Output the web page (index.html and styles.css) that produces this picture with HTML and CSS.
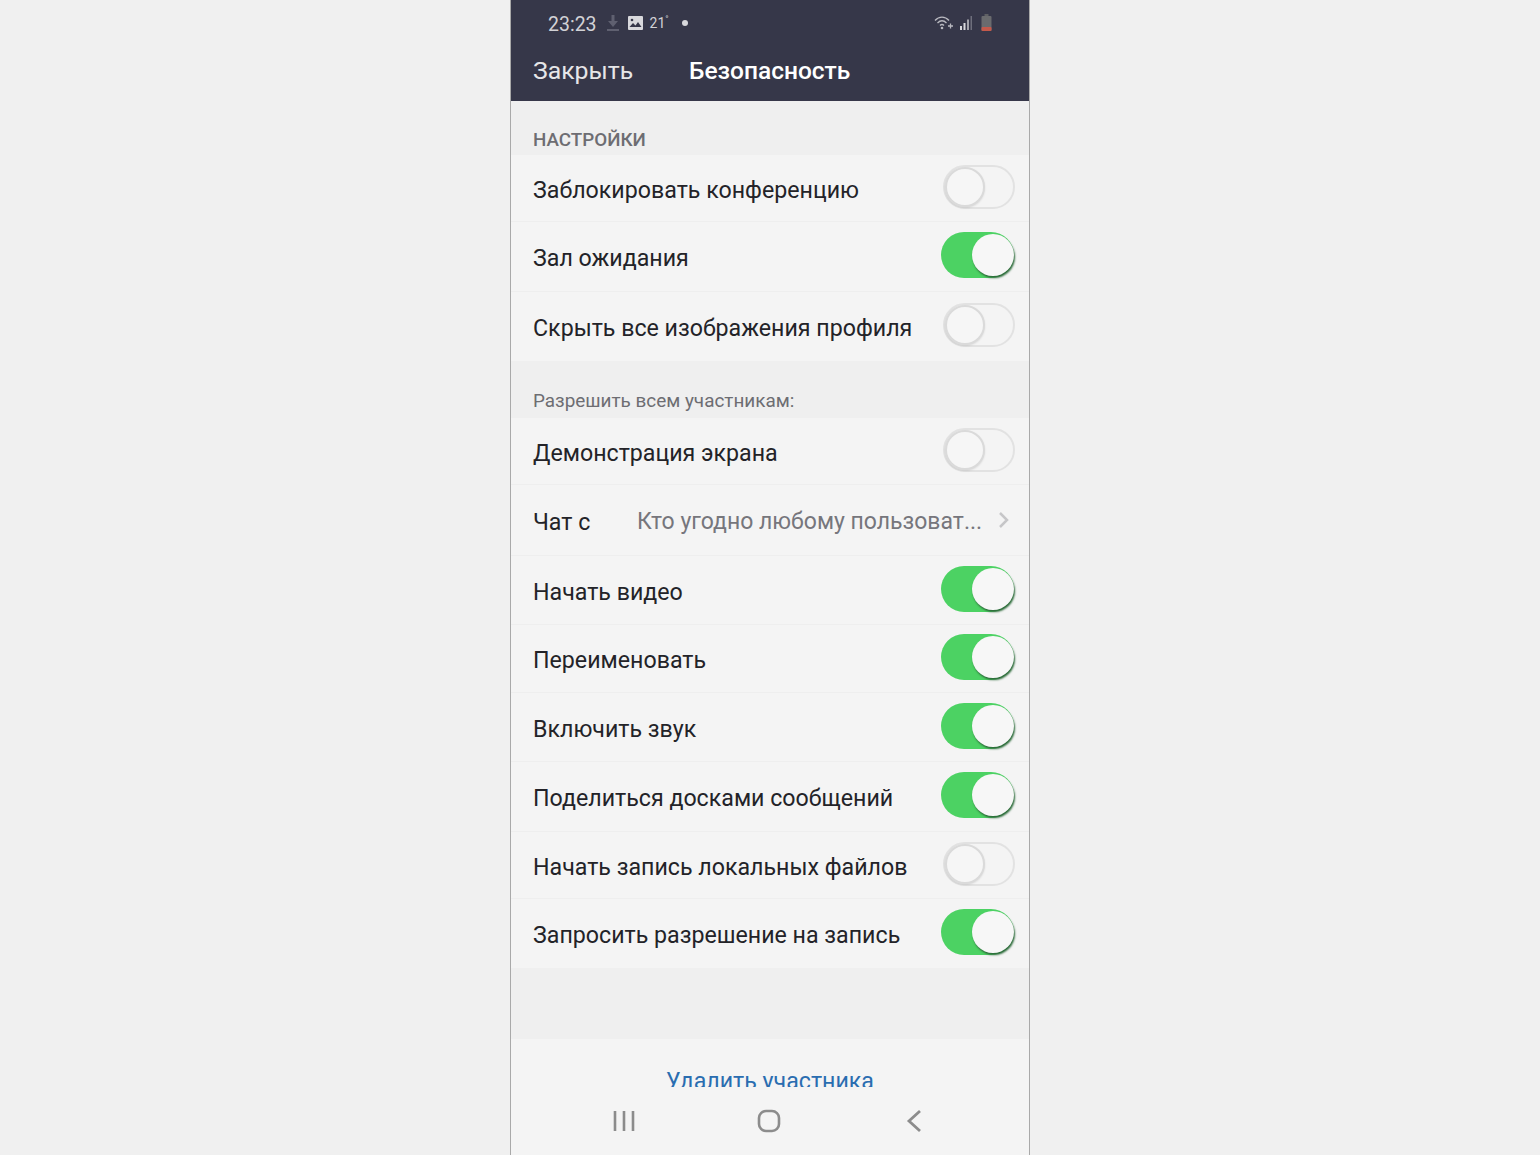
FILE: index.html
```html
<!DOCTYPE html>
<html lang="ru">
<head>
    <meta charset="UTF-8">
    <meta name="viewport" content="width=device-width, initial-scale=1.0">
    <title>Безопасность</title>
    <link rel="stylesheet" href="styles.css">
</head>
<body>
    <div class="phone">
        <div class="header">
            <div class="status-bar">
                <span class="clock">23:23</span>
                <svg class="icon-download" width="12" height="18" viewBox="0 0 12 18"><path d="M4.500 1h3v6H11l-5 6-5-6h3.500z" fill="#5f6070"/><rect x="0" y="15" width="12" height="2" fill="#5f6070"/></svg>
                <svg class="icon-image" width="15" height="14" viewBox="0 0 15 14"><rect width="15" height="14" rx="1" fill="#d8d8dc"/><path d="M1.500 11l3.500-4 2.500 2.500 2.500-3.500 3.500 5z" fill="#363749"/><circle cx="4" cy="4" r="1.300" fill="#363749"/></svg>
                <span class="temp">21<sup>°</sup></span>
                <span class="dot"></span>
                <span class="status-right">
                    <svg width="20" height="16" viewBox="0 0 20 16"><g fill="none" stroke="#b9b9c0" stroke-width="1.300"><path d="M1 5.500C5 1 11 1 15 5.500"/><path d="M3.500 8C6.500 5 9.500 5 12.500 8"/><path d="M6 10.500C7.500 9 8.500 9 10 10.500"/></g><circle cx="8" cy="13" r="1.300" fill="#b9b9c0"/><path d="M14 11h5M16.500 8.500v5" stroke="#b9b9c0" stroke-width="1.300"/></svg>
                    <svg width="14" height="16" viewBox="0 0 14 16"><rect x="1" y="11" width="2" height="4" fill="#d8d8dc"/><rect x="4.500" y="8" width="2" height="7" fill="#d8d8dc"/><rect x="8" y="4.500" width="2" height="10.500" fill="#a4a4ac"/><rect x="11.500" y="1" width="1.500" height="14" fill="#6e6f7c"/></svg>
                    <svg class="battery" width="11" height="18" viewBox="0 0 11 18"><rect x="3.500" y="0" width="4" height="2" fill="#5f6064"/><rect x="0.500" y="2" width="10" height="15" rx="1" fill="#6a6b6e"/><rect x="0.500" y="13" width="10" height="4" rx="1" fill="#c4594b"/></svg>
                </span>
            </div>
            <div class="title-bar">
                <span class="close">Закрыть</span>
                <span class="title">Безопасность</span>
            </div>
        </div>

        <div class="section-label caps">НАСТРОЙКИ</div>
        <div class="group">
            <div class="row row-67"><span class="text">Заблокировать конференцию</span><span class="switch"></span></div>
            <div class="row row-70"><span class="text">Зал ожидания</span><span class="switch on"></span></div>
            <div class="row"><span class="text">Скрыть все изображения профиля</span><span class="switch"></span></div>
        </div>

        <div class="section-label second">Разрешить всем участникам:</div>
        <div class="group">
            <div class="row row-67"><span class="text">Демонстрация экрана</span><span class="switch"></span></div>
            <div class="row row-71 row-chat">
                <span class="text chat-label">Чат с</span>
                <span class="text chat-value">Кто угодно любому пользоват...</span>
                <svg class="chevron" width="12" height="18" viewBox="0 0 12 18"><path d="M2 2l7 7-7 7" fill="none" stroke="#c6c6c8" stroke-width="2.500"/></svg>
            </div>
            <div class="row"><span class="text">Начать видео</span><span class="switch on"></span></div>
            <div class="row row-68"><span class="text">Переименовать</span><span class="switch on"></span></div>
            <div class="row"><span class="text">Включить звук</span><span class="switch on"></span></div>
            <div class="row row-70"><span class="text">Поделиться досками сообщений</span><span class="switch on"></span></div>
            <div class="row row-67"><span class="text">Начать запись локальных файлов</span><span class="switch"></span></div>
            <div class="row"><span class="text">Запросить разрешение на запись</span><span class="switch on"></span></div>
        </div>

        <div class="spacer"></div>

        <div class="footer">
            <div class="remove"><span>Удалить участника</span></div>
            <div class="nav-bar">
                <svg width="24" height="24" viewBox="0 0 24 24"><path d="M3 2v20M12 2v20M21 2v20" stroke="#8c8c8c" stroke-width="2.600" fill="none"/></svg>
                <svg class="icon-home" width="24" height="24" viewBox="0 0 24 24"><rect x="2" y="2" width="20" height="20" rx="7" stroke="#8c8c8c" stroke-width="2.600" fill="none"/></svg>
                <svg width="16" height="24" viewBox="0 0 16 24"><path d="M14 2L3 12l11 10" stroke="#8c8c8c" stroke-width="2.800" fill="none"/></svg>
            </div>
        </div>
    </div>
</body>
</html>
```

FILE: styles.css
```css
html, body {
    margin: 0;
    height: 100%;
}
body {
    background-color: #f0f0f0;
    font-family: Roboto, "Liberation Sans", sans-serif;
    color: #232328;
    overflow: hidden;
}
.phone {
    width: 518px;
    height: 1155px;
    margin-left: 510px;
    border-left: 1px solid #a9a9a9;
    border-right: 1px solid #a9a9a9;
    background-color: #efefef;
    display: flex;
    flex-direction: column;
}
.header {
    height: 101px;
    flex: none;
    background-color: #363749;
    color: #fff;
}
.status-bar {
    height: 46px;
    padding: 0 37px 0 37px;
    display: flex;
    align-items: center;
}
.clock {
    font-size: 19.500px;
    color: #d2d2d6;
    margin-right: 10px;
    padding-top: 2px;
}
.icon-download {
    margin-right: 9px;
}
.icon-image {
    margin-right: 7px;
}
.temp {
    font-size: 14px;
    color: #d2d2d6;
}
.temp sup {
    font-size: 9px;
    line-height: 0;
}
.dot {
    width: 6px;
    height: 6px;
    border-radius: 50%;
    background-color: #d8d8dc;
    margin-left: 13px;
}
.status-right {
    margin-left: auto;
    display: flex;
    align-items: center;
    gap: 5px;
}
.battery {
    margin-left: 3px;
}
.title-bar {
    height: 48px;
    padding-left: 22px;
    display: flex;
    align-items: center;
    font-size: 24.800px;
}
.close {
    color: #e6e6e8;
    width: 156px;
}
.title {
    font-weight: 500;
    font-size: 24.500px;
}
.section-label {
    color: #6d6d72;
    padding-left: 22px;
    font-weight: 500;
    display: flex;
    align-items: flex-end;
}
.caps {
    height: 54px;
    margin-top: 2px;
    margin-bottom: -2px;
    font-size: 18.800px;
    line-height: 34px;
}
.second {
    height: 57px;
    font-size: 18.900px;
    font-weight: 400;
    line-height: 34px;
}
.group {
    background-color: #f4f4f4;
}
.row {
    height: 69px;
    box-sizing: border-box;
    padding: 0 14px 0 22px;
    border-bottom: 1px solid #eeeeee;
    display: flex;
    align-items: center;
    justify-content: space-between;
    font-size: 23.200px;
}
.row:last-child {
    border-bottom: none;
}
.row-67 {
    height: 67px;
}
.row-68 {
    height: 68px;
}
.row-70 {
    height: 70px;
}
.row-71 {
    height: 71px;
}
.text {
    padding-top: 3px;
}
.switch {
    width: 72px;
    height: 44px;
    box-sizing: border-box;
    flex: none;
    margin-bottom: 3px;
    border: 2px solid #e2e2e2;
    border-radius: 22px;
    display: flex;
    align-items: center;
}
.switch::after {
    content: "";
    width: 40px;
    height: 40px;
    box-sizing: border-box;
    border: 2px solid #dadada;
    border-radius: 50%;
    background-color: #f6f6f6;
    box-shadow: 0 1px 2px rgba(0,0,0,0.1);
}
.switch.on {
    width: 73px;
    height: 46px;
    margin-right: 1px;
    border: none;
    background-color: #4cd263;
    border-radius: 23px;
    justify-content: flex-end;
}
.switch.on::after {
    width: 42px;
    height: 42px;
    border: none;
    background-color: #f7f7f7;
    box-shadow: 1px 2px 2px #2d6b3a;
}
.row-chat {
    justify-content: flex-start;
}
.chat-label {
    width: 104px;
}
.chat-value {
    color: #76767c;
    font-size: 23px;
}
.chevron {
    margin-left: auto;
    margin-right: 5px;
}
.spacer {
    flex: 1;
}
.footer {
    height: 116px;
    flex: none;
    background-color: #f4f4f4;
}
.remove {
    height: 48px;
    box-sizing: border-box;
    overflow: hidden;
    text-align: center;
    color: #2a6db0;
    font-size: 23.200px;
    padding-top: 28px;
    line-height: 28px;
}
.nav-bar {
    height: 68px;
    padding: 0 107px 0 101px;
    display: flex;
    align-items: center;
    justify-content: space-between;
}
.icon-home {
    margin-right: 4px;
}
```
